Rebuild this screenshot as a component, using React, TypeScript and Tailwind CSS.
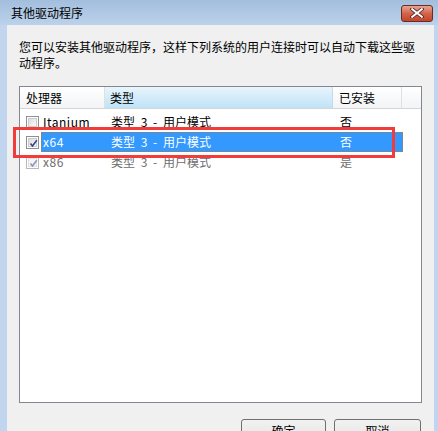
import React from "react";

const font = "font-['Noto_Sans_CJK_SC','Noto_Sans',sans-serif]";

function Check({ checked, disabled }: { checked: boolean; disabled?: boolean }) {
  return (
    <div
      className={`w-[13px] h-[13px] shrink-0 border ${
        disabled ? "border-[#b8b8b8]" : "border-[#8e8f8f]"
      } bg-white p-[1px]`}
    >
      <div
        className={`w-full h-full border ${
          disabled ? "border-[#e0e0e0] bg-[#f4f4f4]" : "border-[#c9cbcf] bg-gradient-to-br from-[#dcdcdc] to-[#fafafa]"
        } relative`}
      >
        {checked && (
          <svg viewBox="0 0 9 9" className="absolute left-[0px] top-[0px] w-[9px] h-[9px]">
            <path
              d="M1.5 4.5 L3.5 7 L7.8 1.2"
              fill="none"
              stroke={disabled ? "#8a97bb" : "#33428a"}
              strokeWidth="1.6"
            />
          </svg>
        )}
      </div>
    </div>
  );
}

export default function App() {
  const rows = [
    { cpu: "Itanium", type: "类型 3 - 用户模式", inst: "否", checked: false, sel: false, dis: false },
    { cpu: "x64", type: "类型 3 - 用户模式", inst: "否", checked: true, sel: true, dis: false },
    { cpu: "x86", type: "类型 3 - 用户模式", inst: "是", checked: true, sel: false, dis: true },
  ];
  return (
    <div className={`relative w-[438px] h-[431px] overflow-hidden bg-[#c1d6ee] flex flex-col ${font} text-[12px] text-black`}>
      {/* title bar */}
      <div className="h-[25px] shrink-0 flex items-center justify-between pl-[11px] pr-[5px] bg-gradient-to-b from-[#a3bedd] to-[#bcd2eb]">
        <span className="leading-[16px] text-[12px] text-black">其他驱动程序</span>
        <div className="w-[32px] h-[17px] mt-[1px] rounded-[3px] border border-[#6b2b22] bg-gradient-to-b from-[#e6a592] via-[#d2644a] to-[#c1452c] flex items-center justify-center">
          <svg viewBox="0 0 14 10" className="w-[14px] h-[10px]">
            <path d="M2 1 L12 9 M12 1 L2 9" stroke="#5a2a2a" strokeWidth="3.6" strokeLinecap="square" fill="none" />
            <path d="M2.2 1.2 L11.8 8.8 M11.8 1.2 L2.2 8.8" stroke="#ffffff" strokeWidth="2" strokeLinecap="square" fill="none" />
          </svg>
        </div>
      </div>

      {/* client area */}
      <div className="flex-1 ml-[7px] mr-[4px] bg-[#f0f0f0] pl-[12px] pr-[13px] pt-[14px] flex flex-col">
        <div className="leading-[16px] whitespace-nowrap">
          <div>您可以安装其他驱动程序，这样下列系统的用户连接时可以自动下载这些驱</div>
          <div>动程序。</div>
        </div>

        <div className="mt-[15px] w-[403px] h-[317px] shrink-0 border border-[#828790] bg-white flex flex-col">
          {/* header */}
          <div className="h-[22px] flex border-b border-[#d5d5d5] leading-[16px]">
            <div className="w-[85px] border-r border-[#e0e0e0] bg-gradient-to-b from-white to-[#f3f4f6] flex items-center pl-[6px]">
              处理器
            </div>
            <div className="w-[228px] border-r border-[#c9d8e2] bg-gradient-to-b from-[#e8f5fd] to-[#bfe3f7] flex items-center pl-[5px]">
              类型
            </div>
            <div className="w-[69px] border-r border-[#e0e0e0] bg-gradient-to-b from-white to-[#f3f4f6] flex items-center pl-[6px]">
              已安装
            </div>
            <div className="flex-1 bg-gradient-to-b from-white to-[#f3f4f6]" />
          </div>

          {/* rows */}
          <div className="pt-[3px] flex flex-col">
            {rows.map((r) => (
              <div key={r.cpu} className="h-[20px] flex items-center pl-[6px]">
                <Check checked={r.checked} disabled={r.dis} />
                <div
                  className={`ml-[2px] w-[362px] h-[20px] flex items-center leading-[16px] ${
                    r.sel
                      ? "bg-[#3399ff] text-white border border-dotted border-[#b07a3c]"
                      : r.dis
                      ? "text-[#6d6d6d] border border-transparent"
                      : "text-black border border-transparent"
                  }`}
                >
                  <span className="w-[69px] pl-[1px] tracking-[0.5px]">{r.cpu}</span>
                  <span className="w-[229px] [word-spacing:3px]">{r.type}</span>
                  <span>{r.inst}</span>
                </div>
              </div>
            ))}
          </div>
        </div>

        <div className="mt-[16px] flex justify-end gap-[8px]">
          <div className="w-[85px] h-[23px] rounded-[3px] border border-[#707070] bg-gradient-to-b from-[#f2f2f2] via-[#ebebeb] to-[#d6d6d6] flex items-center justify-center leading-[16px]">
            确定
          </div>
          <div className="w-[87px] h-[23px] rounded-[3px] border border-[#707070] bg-gradient-to-b from-[#f2f2f2] via-[#ebebeb] to-[#d6d6d6] flex items-center justify-center leading-[16px]">
            取消
          </div>
        </div>
      </div>

      {/* red annotation */}
      <div className="absolute left-[13px] top-[127px] w-[382px] h-[31px] border-[3px] border-[#f23b3b] pointer-events-none" />
    </div>
  );
}
